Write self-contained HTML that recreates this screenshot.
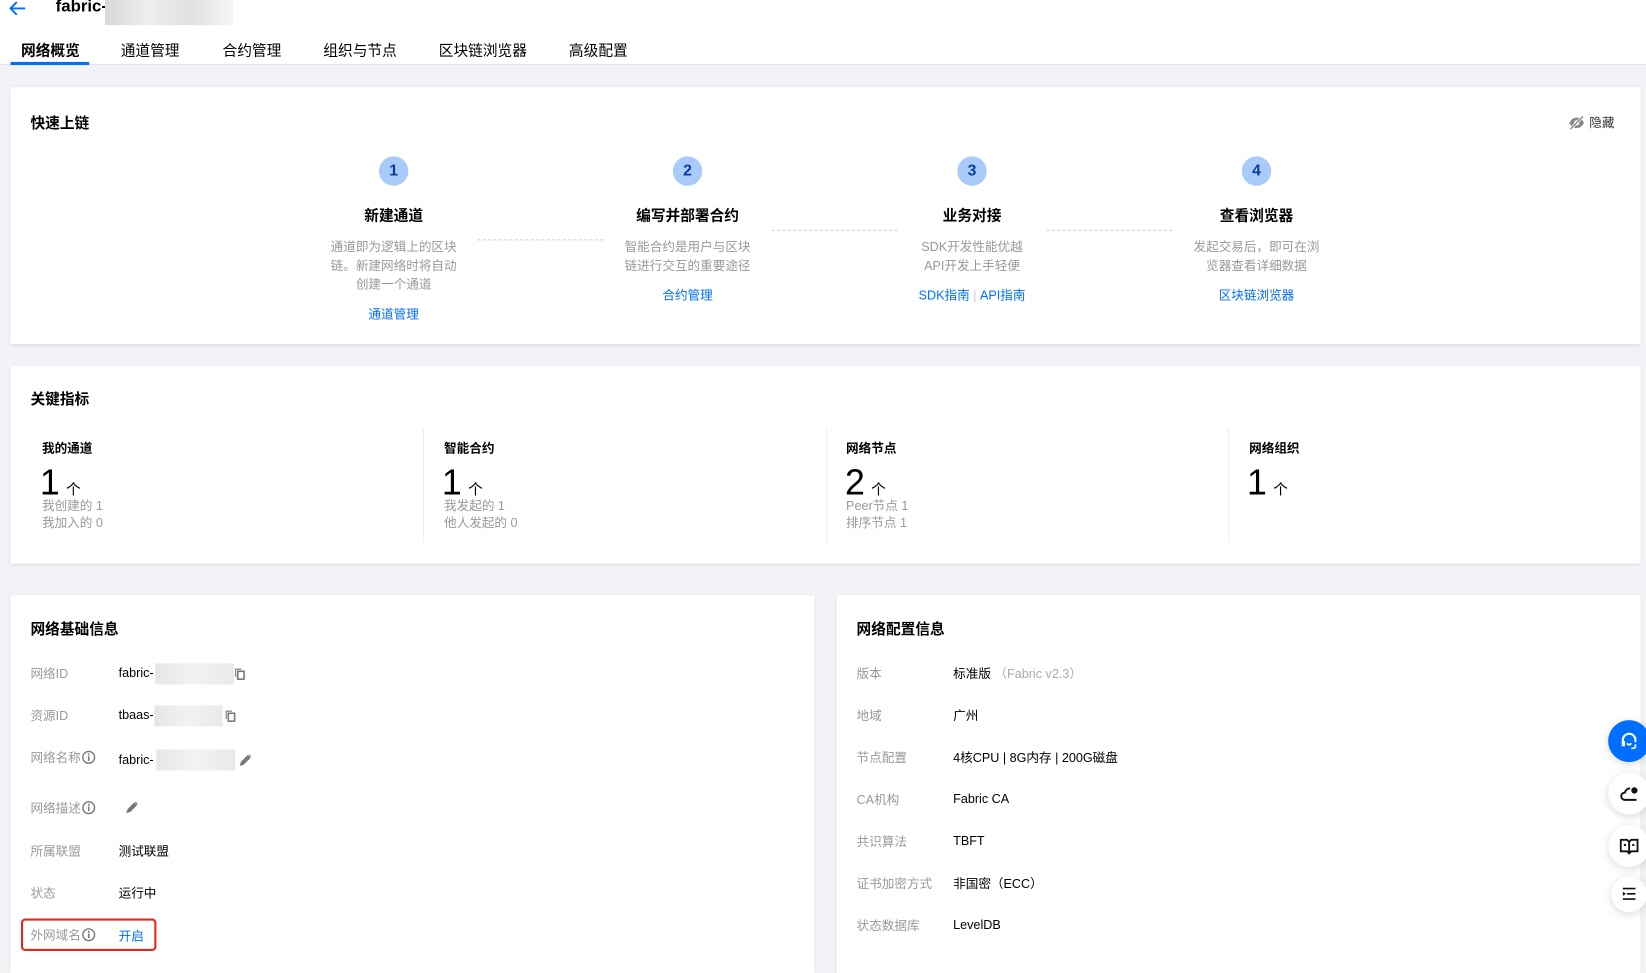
<!DOCTYPE html>
<html><head><meta charset="utf-8"><style>
*{margin:0;padding:0;box-sizing:border-box}
html,body{width:1646px;height:955px;overflow:hidden;background:#f2f3f6}
body{font-family:"Liberation Sans","Noto Sans CJK SC",sans-serif;color:#000}
#w{position:absolute;left:0;top:0;width:1568px;height:910px;transform:scale(1.0497);transform-origin:0 0}
.a{position:absolute;white-space:nowrap}
.card{position:absolute;background:#fff;box-shadow:0 1px 3px rgba(0,0,0,.12)}
.h{font-size:14px;font-weight:bold;color:#000}
.c{transform:translate(-50%,-50%);text-align:center}
.g{color:#999;font-size:12px}
.b{color:#006eff;font-size:12px}
.lab{font-size:12px;color:#999}
.val{font-size:12px;color:#000}
.blur{background:linear-gradient(90deg,#e6e6e6,#f2f2f2,#e9e9e9);position:absolute}
.dash{position:absolute;border-top:1px dashed #ccc;height:0}
.circ{position:absolute;width:28px;height:28px;border-radius:50%;background:#a9cbfb;color:#0b3a97;font-weight:bold;font-size:15px;text-align:center;line-height:28px;transform:translate(-50%,-50%)}
.vd{position:absolute;width:1px;background:#eee;top:408px;height:109px}
.fb{position:absolute;width:38px;height:38px;border-radius:50%;background:#fff;box-shadow:0 2px 8px rgba(0,0,0,.15);transform:translate(-50%,-50%)}
.ii{display:inline-block;vertical-align:-2px;margin-left:1px}
</style></head><body><div id="w">
<div class="a" style="left:0;top:0;width:1568px;height:62px;background:#fff;border-bottom:1px solid #e5e5e5"></div>
<svg class="a" style="left:9px;top:1px" width="16" height="14" viewBox="0 0 16 14"><path d="M15 7H2M7 1L1 7l6 6" fill="none" stroke="#006eff" stroke-width="1.8"/></svg>
<div class="a" style="left:53px;top:-2px;font-size:16px;font-weight:bold">fabric-</div>
<div class="blur" style="left:100px;top:0;width:122px;height:24px;background:linear-gradient(90deg,#d8d8d8,#eee,#e0e0e0,#f6f6f6)"></div>
<div class="a" style="left:20px;top:38px;font-size:14px;font-weight:bold">网络概览</div>
<div class="a" style="left:10px;top:59px;width:75px;height:3px;background:#006eff"></div>
<div class="a" style="left:115px;top:38px;font-size:14px">通道管理</div>
<div class="a" style="left:212px;top:38px;font-size:14px">合约管理</div>
<div class="a" style="left:308px;top:38px;font-size:14px">组织与节点</div>
<div class="a" style="left:418px;top:38px;font-size:14px">区块链浏览器</div>
<div class="a" style="left:542px;top:38px;font-size:14px">高级配置</div>

<div class="card" style="left:10px;top:83px;width:1553px;height:245px"></div>
<div class="a h" style="left:29px;top:107px">快速上链</div>
<svg class="a" style="left:1494px;top:110px" width="16" height="14" viewBox="0 0 16 14"><path d="M1 7c2-4 5-5 7-5s5 1 7 5c-2 4-5 5-7 5S3 11 1 7z" fill="#888"/><circle cx="8" cy="7" r="2.5" fill="#fff"/><path d="M2 13L14 1" stroke="#fff" stroke-width="2.5"/><path d="M2 13L14 1" stroke="#888" stroke-width="1.3"/></svg>
<div class="a" style="left:1514px;top:108px;font-size:12px;color:#333">隐藏</div>

<div class="circ" style="left:375px;top:163px">1</div>
<div class="circ" style="left:655px;top:163px">2</div>
<div class="circ" style="left:926px;top:163px">3</div>
<div class="circ" style="left:1197px;top:163px">4</div>
<div class="a h c" style="left:375px;top:205px">新建通道</div>
<div class="a h c" style="left:655px;top:205px">编写并部署合约</div>
<div class="a h c" style="left:926px;top:205px">业务对接</div>
<div class="a h c" style="left:1197px;top:205px">查看浏览器</div>
<div class="a g c" style="left:375px;top:253px;line-height:18px">通道即为逻辑上的区块<br>链。新建网络时将自动<br>创建一个通道</div>
<div class="a g c" style="left:655px;top:244px;line-height:18px">智能合约是用户与区块<br>链进行交互的重要途径</div>
<div class="a g c" style="left:926px;top:244px;line-height:18px">SDK开发性能优越<br>API开发上手轻便</div>
<div class="a g c" style="left:1197px;top:244px;line-height:18px">发起交易后，即可在浏<br>览器查看详细数据</div>
<div class="a b c" style="left:375px;top:299px">通道管理</div>
<div class="a b c" style="left:655px;top:281px">合约管理</div>
<div class="a b c" style="left:926px;top:281px">SDK指南 <span style="color:#ccc">|</span> API指南</div>
<div class="a b c" style="left:1197px;top:281px">区块链浏览器</div>
<div class="dash" style="left:455px;top:228px;width:120px"></div>
<div class="dash" style="left:735px;top:219px;width:120px"></div>
<div class="dash" style="left:997px;top:219px;width:120px"></div>

<div class="card" style="left:10px;top:349px;width:1553px;height:188px"></div>
<div class="a h" style="left:29px;top:370px">关键指标</div>
<div class="vd" style="left:403px"></div><div class="vd" style="left:787px"></div><div class="vd" style="left:1170px"></div>
<div class="a" style="left:40px;top:418px;font-size:12px;font-weight:bold">我的通道</div>
<div class="a" style="left:423px;top:418px;font-size:12px;font-weight:bold">智能合约</div>
<div class="a" style="left:806px;top:418px;font-size:12px;font-weight:bold">网络节点</div>
<div class="a" style="left:1190px;top:418px;font-size:12px;font-weight:bold">网络组织</div>
<div class="a" style="left:38px;top:441px;font-size:34px;line-height:38px">1<span style="font-size:14px;margin-left:6px">个</span></div>
<div class="a" style="left:421px;top:441px;font-size:34px;line-height:38px">1<span style="font-size:14px;margin-left:6px">个</span></div>
<div class="a" style="left:805px;top:441px;font-size:34px;line-height:38px">2<span style="font-size:14px;margin-left:6px">个</span></div>
<div class="a" style="left:1188px;top:441px;font-size:34px;line-height:38px">1<span style="font-size:14px;margin-left:6px">个</span></div>
<div class="a g" style="left:40px;top:474px;line-height:16px">我创建的 1<br>我加入的 0</div>
<div class="a g" style="left:423px;top:474px;line-height:16px">我发起的 1<br>他人发起的 0</div>
<div class="a g" style="left:806px;top:474px;line-height:16px">Peer节点 1<br>排序节点 1</div>

<div class="card" style="left:10px;top:567px;width:766px;height:360px"></div>
<div class="card" style="left:797px;top:567px;width:766px;height:360px"></div>
<div class="a h" style="left:29px;top:589px">网络基础信息</div>
<div class="a h" style="left:816px;top:589px">网络配置信息</div>

<div class="a lab" style="left:29px;top:633px">网络ID</div>
<div class="a val" style="left:113px;top:634px">fabric-</div>
<div class="blur" style="left:148px;top:632px;width:75px;height:20px"></div>
<svg class="a" style="left:223px;top:636px" width="11" height="12" viewBox="0 0 11 12"><path d="M1 1h6v1H2v7H1z" fill="#777"/><rect x="3.5" y="3.5" width="6" height="7.5" fill="none" stroke="#777" stroke-width="1.5"/></svg>
<div class="a lab" style="left:29px;top:673px">资源ID</div>
<div class="a val" style="left:113px;top:674px">tbaas-</div>
<div class="blur" style="left:147px;top:672px;width:65px;height:20px"></div>
<svg class="a" style="left:214px;top:676px" width="11" height="12" viewBox="0 0 11 12"><path d="M1 1h6v1H2v7H1z" fill="#777"/><rect x="3.5" y="3.5" width="6" height="7.5" fill="none" stroke="#777" stroke-width="1.5"/></svg>
<div class="a lab" style="left:29px;top:713px">网络名称<svg class="ii" width="13" height="13" viewBox="0 0 13 13"><circle cx="6.5" cy="6.5" r="5.6" fill="none" stroke="#777" stroke-width="1.3"/><rect x="5.8" y="5.3" width="1.5" height="4.5" fill="#777"/><circle cx="6.5" cy="3.6" r=".9" fill="#777"/></svg></div>
<div class="a val" style="left:113px;top:717px">fabric-</div>
<div class="blur" style="left:149px;top:714px;width:75px;height:20px"></div>
<svg class="a" style="left:228px;top:718px" width="12" height="12" viewBox="0 0 12 12"><path d="M1 11l1-3 6-6 2 2-6 6z M9 1l2 2" fill="#777" stroke="#777"/></svg>
<div class="a lab" style="left:29px;top:761px">网络描述<svg class="ii" width="13" height="13" viewBox="0 0 13 13"><circle cx="6.5" cy="6.5" r="5.6" fill="none" stroke="#777" stroke-width="1.3"/><rect x="5.8" y="5.3" width="1.5" height="4.5" fill="#777"/><circle cx="6.5" cy="3.6" r=".9" fill="#777"/></svg></div>
<svg class="a" style="left:120px;top:763px" width="12" height="12" viewBox="0 0 12 12"><path d="M1 11l1-3 6-6 2 2-6 6z M9 1l2 2" fill="#777" stroke="#777"/></svg>
<div class="a lab" style="left:29px;top:802px">所属联盟</div>
<div class="a val" style="left:113px;top:802px">测试联盟</div>
<div class="a lab" style="left:29px;top:842px">状态</div>
<div class="a val" style="left:113px;top:842px">运行中</div>
<div class="a" style="left:20px;top:875px;width:129px;height:31px;border:2px solid #e8261e;border-radius:4px"></div>
<div class="a lab" style="left:29px;top:882px">外网域名<svg class="ii" width="13" height="13" viewBox="0 0 13 13"><circle cx="6.5" cy="6.5" r="5.6" fill="none" stroke="#777" stroke-width="1.3"/><rect x="5.8" y="5.3" width="1.5" height="4.5" fill="#777"/><circle cx="6.5" cy="3.6" r=".9" fill="#777"/></svg></div>
<div class="a b" style="left:113px;top:883px">开启</div>

<div class="a lab" style="left:816px;top:633px">版本</div>
<div class="a val" style="left:908px;top:633px">标准版 <span style="color:#aaa">（Fabric v2.3）</span></div>
<div class="a lab" style="left:816px;top:673px">地域</div>
<div class="a val" style="left:908px;top:673px">广州</div>
<div class="a lab" style="left:816px;top:713px">节点配置</div>
<div class="a val" style="left:908px;top:713px">4核CPU | 8G内存 | 200G磁盘</div>
<div class="a lab" style="left:816px;top:753px">CA机构</div>
<div class="a val" style="left:908px;top:754px">Fabric CA</div>
<div class="a lab" style="left:816px;top:793px">共识算法</div>
<div class="a val" style="left:908px;top:794px">TBFT</div>
<div class="a lab" style="left:816px;top:833px">证书加密方式</div>
<div class="a val" style="left:908px;top:833px">非国密（ECC）</div>
<div class="a lab" style="left:816px;top:873px">状态数据库</div>
<div class="a val" style="left:908px;top:874px">LevelDB</div>

<div class="fb" style="left:1552px;top:706px;width:40px;height:40px;background:#006eff"></div>
<svg class="a" style="left:1543px;top:697px" width="18" height="18" viewBox="0 0 18 18"><path d="M3 10V8a6 6 0 0 1 12 0v2" fill="none" stroke="#fff" stroke-width="2"/><rect x="2" y="9" width="3" height="5" fill="#fff"/><path d="M7 11c1 2 3 2 4 0M15 12v2c0 1-1 2-4 2" fill="none" stroke="#fff" stroke-width="1.6"/></svg>
<div class="fb" style="left:1552px;top:756px;width:40px;height:40px"></div>
<svg class="a" style="left:1543px;top:748px" width="18" height="16" viewBox="0 0 18 16"><path d="M10 3a5 5 0 0 0-5 4 3.5 3.5 0 0 0 0 7h11" fill="none" stroke="#111" stroke-width="1.8"/><circle cx="14" cy="5" r="3" fill="#111"/></svg>
<div class="fb" style="left:1552px;top:806px;width:40px;height:40px"></div>
<svg class="a" style="left:1543px;top:798px" width="18" height="16" viewBox="0 0 18 16"><path d="M1 2h6l2 2 2-2h6v11h-6l-2 2-2-2H1z M9 4v11" fill="none" stroke="#111" stroke-width="1.8"/><rect x="4" y="6" width="2" height="2" fill="#111"/><rect x="12" y="6" width="2" height="2" fill="#111"/></svg>
<div class="fb" style="left:1552px;top:852px;width:34px;height:34px"></div>
<svg class="a" style="left:1545px;top:845px" width="14" height="13" viewBox="0 0 14 13"><path d="M1 1.5h12M5 6.5h8M1 11.5h12" stroke="#111" stroke-width="1.6"/><path d="M1 4.5l3 2-3 2z" fill="#111"/></svg>
</div></body></html>
